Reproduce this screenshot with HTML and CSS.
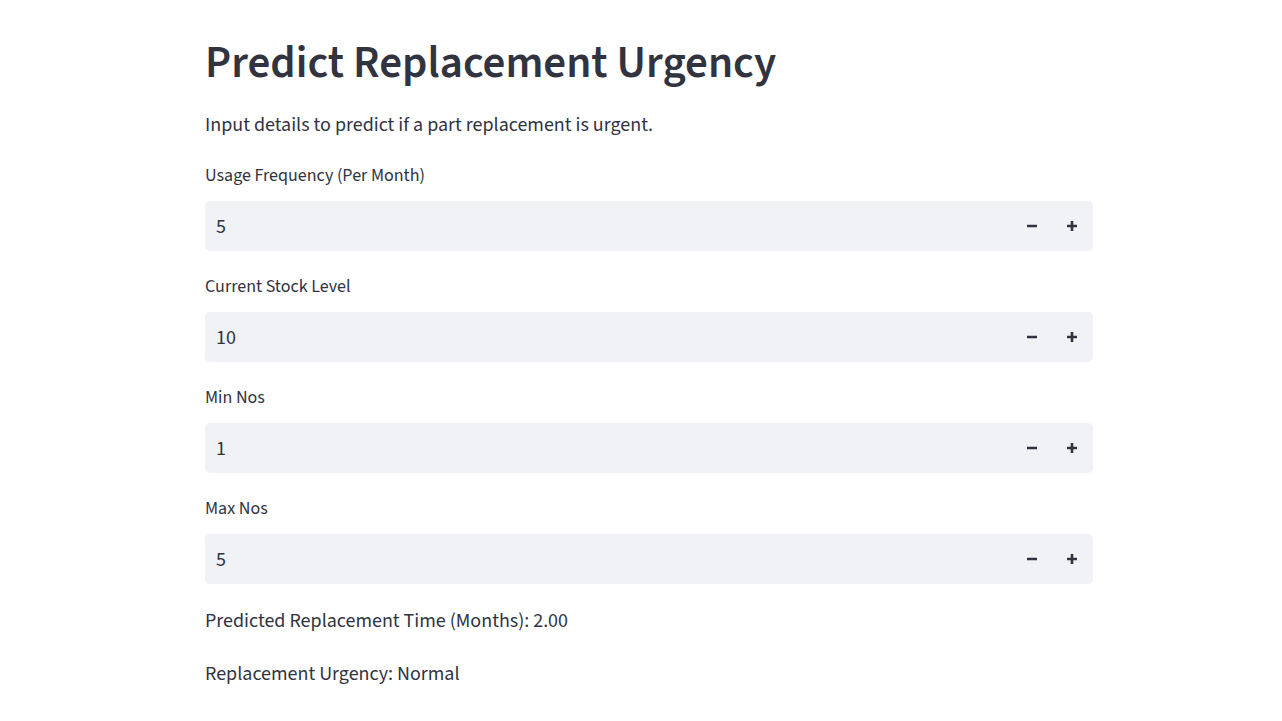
FILE: index.html
```html
<!DOCTYPE html>
<html lang="en">
<head>
<meta charset="utf-8">
<meta name="viewport" content="width=device-width, initial-scale=1">
<title>Predict Replacement Urgency</title>
<link rel="stylesheet" href="styles.css">
</head>
<body>
<main class="page">
  <h1 class="title">Predict Replacement Urgency</h1>
  <p class="text">Input details to predict if a part replacement is urgent.</p>
  <form class="form">
    <div class="field">
      <label class="label" for="usage">Usage Frequency (Per Month)</label>
      <div class="control">
        <input class="input" id="usage" type="number" value="5">
        <button class="step" type="button" aria-label="Decrease usage frequency"><svg class="icon" viewBox="0 0 20 20"><path d="M5 8.7h10v2.6H5z"/></svg></button>
        <button class="step" type="button" aria-label="Increase usage frequency"><svg class="icon" viewBox="0 0 20 20"><path d="M8.7 5h2.6v3.7H15v2.6h-3.7V15H8.7v-3.7H5V8.7h3.7z"/></svg></button>
      </div>
    </div>
    <div class="field">
      <label class="label" for="stock">Current Stock Level</label>
      <div class="control">
        <input class="input" id="stock" type="number" value="10">
        <button class="step" type="button" aria-label="Decrease stock level"><svg class="icon" viewBox="0 0 20 20"><path d="M5 8.7h10v2.6H5z"/></svg></button>
        <button class="step" type="button" aria-label="Increase stock level"><svg class="icon" viewBox="0 0 20 20"><path d="M8.7 5h2.6v3.7H15v2.6h-3.7V15H8.7v-3.7H5V8.7h3.7z"/></svg></button>
      </div>
    </div>
    <div class="field">
      <label class="label" for="min">Min Nos</label>
      <div class="control">
        <input class="input" id="min" type="number" value="1">
        <button class="step" type="button" aria-label="Decrease min nos"><svg class="icon" viewBox="0 0 20 20"><path d="M5 8.7h10v2.6H5z"/></svg></button>
        <button class="step" type="button" aria-label="Increase min nos"><svg class="icon" viewBox="0 0 20 20"><path d="M8.7 5h2.6v3.7H15v2.6h-3.7V15H8.7v-3.7H5V8.7h3.7z"/></svg></button>
      </div>
    </div>
    <div class="field">
      <label class="label" for="max">Max Nos</label>
      <div class="control">
        <input class="input" id="max" type="number" value="5">
        <button class="step" type="button" aria-label="Decrease max nos"><svg class="icon" viewBox="0 0 20 20"><path d="M5 8.7h10v2.6H5z"/></svg></button>
        <button class="step" type="button" aria-label="Increase max nos"><svg class="icon" viewBox="0 0 20 20"><path d="M8.7 5h2.6v3.7H15v2.6h-3.7V15H8.7v-3.7H5V8.7h3.7z"/></svg></button>
      </div>
    </div>
  </form>
  <p class="text">Predicted Replacement Time (Months): 2.00</p>
  <p class="text">Replacement Urgency: Normal</p>
</main>
</body>
</html>
```

FILE: styles.css
```css
* { box-sizing: border-box; }
body {
  margin: 0;
  background: #fff;
  color: #31333f;
  font-family: "Source Sans 3", "Noto Sans CJK SC", "Noto Sans", sans-serif;
}
.page {
  display: flex;
  flex-direction: column;
  gap: 21px;
  max-width: 888px;
  margin: 0 189px 0 auto;
  padding: 38px 0 32px;
}
.title {
  margin: 0;
  font-size: 45px;
  line-height: 50px;
  font-weight: 600;
}
.text {
  margin: 0;
  font-size: 20px;
  line-height: 32px;
}
.form {
  display: flex;
  flex-direction: column;
  gap: 22px;
}
.field {
  display: flex;
  flex-direction: column;
  gap: 11px;
}
.label {
  font-size: 18px;
  line-height: 28px;
}
.control {
  display: flex;
  height: 50px;
  padding: 0 1px;
  overflow: hidden;
  border-radius: 5px;
  background: #f0f2f6;
}
.input {
  flex: 1;
  min-width: 0;
  padding: 2px 10px 0;
  border: 0;
  outline: 0;
  background: transparent;
  color: inherit;
  font: inherit;
  font-size: 20px;
  appearance: textfield;
}
.input::-webkit-inner-spin-button { appearance: none; margin: 0; }
.step {
  display: flex;
  align-items: center;
  justify-content: center;
  width: 40px;
  padding: 0;
  border: 0;
  background: transparent;
  color: inherit;
  cursor: pointer;
}
.icon {
  width: 20px;
  height: 20px;
  fill: currentColor;
}
```
